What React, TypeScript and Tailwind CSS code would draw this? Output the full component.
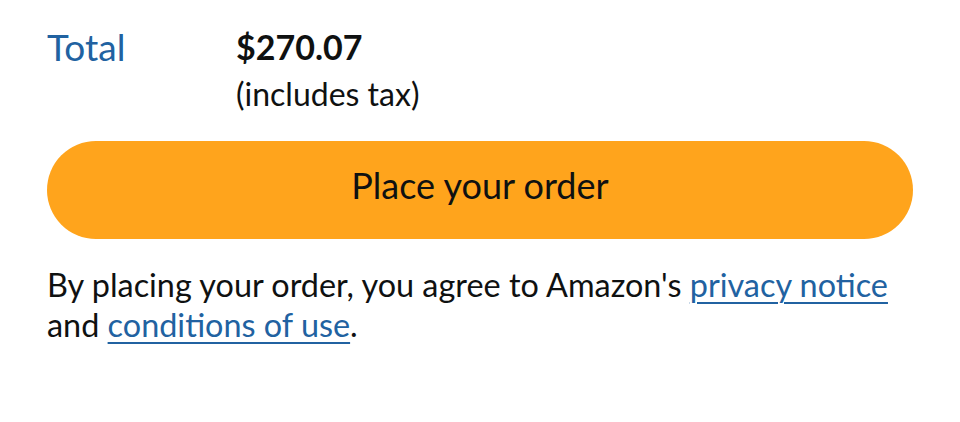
export default function App() {
  return (
    <div className="w-[960px] h-[422px] bg-white px-[47px] pt-[25px] font-['Lato','Liberation_Sans',sans-serif] text-[#0f1111]">
      <div className="flex items-start">
        <div className="w-[189px] text-[37px] text-[#2162a1] leading-[44px]">Total</div>
        <div className="flex flex-col">
          <span className="text-[34px] font-bold leading-[44px]">$270.07</span>
          <span className="mt-[3px] text-[32px] leading-[44px]">(includes tax)</span>
        </div>
      </div>
      <button className="mt-[25px] w-[866px] h-[98px] pb-[10px] rounded-full bg-[#ffa41c] text-[36px] text-[#0f1111]">
        Place your order
      </button>
      <p className="mt-[26px] text-[32.4px] leading-[40px]">
        By placing your order, you agree to Amazon's{" "}
        <a className="text-[#2162a1] underline underline-offset-[5px] decoration-[1.5px]">privacy notice</a>
        <br />
        and <a className="text-[#2162a1] underline underline-offset-[5px] decoration-[1.5px]">conditions of use</a>.
      </p>
    </div>
  );
}
